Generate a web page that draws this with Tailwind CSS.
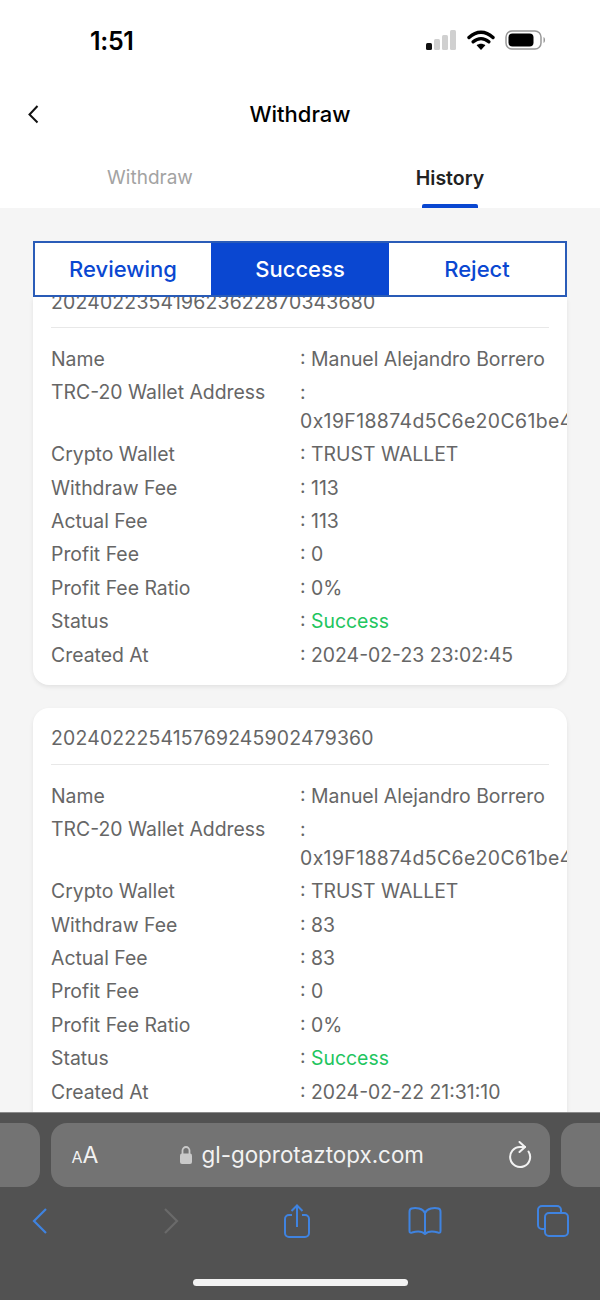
<!DOCTYPE html>
<html lang="en">
<head>
  <meta charset="UTF-8" />
  <meta name="viewport" content="width=device-width, initial-scale=1.0" />
  <title>Withdraw</title>
  <script src="https://cdn.jsdelivr.net/npm/@tailwindcss/browser@4"></script>
</head>
<body class="w-[600px] h-[1300px] overflow-hidden flex flex-col bg-white font-['Inter','Liberation_Sans',sans-serif]">

  <!-- status bar -->
  <div class="h-[76px] shrink-0 flex items-start justify-between pt-[26px] pl-[90px] pr-[53px]">
    <span class="text-[25px] leading-[30px] font-semibold text-black tracking-[-0.3px]">1:51</span>
    <div class="flex items-center h-[28px]">
      <svg width="30" height="20" viewBox="0 0 30 20"><rect x="0" y="13" width="6" height="7" rx="1.5" fill="#111"/><rect x="8" y="9" width="6" height="11" rx="1.5" fill="#d0d0d0"/><rect x="16" y="5" width="6" height="15" rx="1.5" fill="#d0d0d0"/><rect x="24" y="0" width="6" height="20" rx="1.5" fill="#d0d0d0"/></svg>
      <svg class="ml-[11px]" width="28" height="20" viewBox="0 0 28 20"><path d="M2 7.500C9.500 .5 18.500 .5 26 7.500M6.200 11.800C11 7.600 17 7.600 21.800 11.800" fill="none" stroke="#000" stroke-width="3.400" stroke-linecap="round"/><path d="M14 20 9.600 15.200C12.300 13.200 15.700 13.200 18.400 15.200Z" fill="#000"/></svg>
      <svg class="ml-[10px]" width="42" height="20" viewBox="0 0 42 20"><rect x="1" y="1" width="35" height="18" rx="6" fill="none" stroke="#999" stroke-width="1.500"/><rect x="3.500" y="3.500" width="25" height="13" rx="4" fill="#000"/><path d="M38.500 7c2 .5 2 5.500 0 6Z" fill="#999"/></svg>
    </div>
  </div>

  <!-- header -->
  <div class="h-[76px] shrink-0 relative flex items-center justify-center">
    <svg class="absolute left-[27px] top-[28px]" width="13" height="20" viewBox="0 0 13 20"><path d="M10.500 2 2.500 10.500 10.500 18.500" fill="none" stroke="#111" stroke-width="2"/></svg>
    <h1 class="text-[22px] leading-[28px] font-medium text-black">Withdraw</h1>
  </div>

  <!-- tabs -->
  <div class="h-[56px] shrink-0 grid grid-cols-2 text-[19px]">
    <div class="flex justify-center pt-[12px] text-[#a3a3a3]">Withdraw</div>
    <div class="relative flex justify-center pt-[12px] text-[19.5px] font-semibold text-[#222]">
      History
      <span class="absolute bottom-0 left-[122px] w-[56px] h-[4px] rounded-t-[2px] bg-[#0a47d1]"></span>
    </div>
  </div>

  <!-- content -->
  <main class="flex-1 min-h-0 overflow-hidden bg-[#f5f5f5] px-[33px] pt-[33px]">
    <div class="grid grid-cols-[176px_178px_1fr] h-[56px] border-2 border-[#2a5cb8] bg-white text-[22px] font-medium text-[#0a47d1]">
      <div class="flex items-center justify-center">Reviewing</div>
      <div class="flex items-center justify-center bg-[#0a47d1] text-white">Success</div>
      <div class="flex items-center justify-center">Reject</div>
    </div>

    <!-- first card is scrolled under the segment control -->
    <section class="bg-white rounded-b-[16px] shadow-[0_2px_4px_rgba(0,0,0,0.08)] overflow-hidden px-[18px] h-[388px]">
      <div class="-mt-[7px] h-[38px] text-[19.4px] leading-[24px] tracking-[0.2px] text-[#666] border-b border-[#e8e8e8]">202402235419623622870343680</div>
      <dl class="pt-[15px] text-[19.4px] leading-[33.4px] text-[#666]">
        <div class="flex"><dt class="w-[249px] shrink-0">Name</dt><dd>: Manuel Alejandro Borrero</dd></div>
        <div class="flex"><dt class="w-[249px] shrink-0">TRC-20 Wallet Address</dt><dd class="whitespace-nowrap">:<br /><span class="block -mt-[5px] tracking-[0.4px]">0x19F18874d5C6e20C61be49f4</span></dd></div>
        <div class="flex"><dt class="w-[249px] shrink-0">Crypto Wallet</dt><dd>: TRUST WALLET</dd></div>
        <div class="flex"><dt class="w-[249px] shrink-0">Withdraw Fee</dt><dd>: 113</dd></div>
        <div class="flex"><dt class="w-[249px] shrink-0">Actual Fee</dt><dd>: 113</dd></div>
        <div class="flex"><dt class="w-[249px] shrink-0">Profit Fee</dt><dd>: 0</dd></div>
        <div class="flex"><dt class="w-[249px] shrink-0">Profit Fee Ratio</dt><dd>: 0%</dd></div>
        <div class="flex"><dt class="w-[249px] shrink-0">Status</dt><dd>: <span class="text-[#22c55e]">Success</span></dd></div>
        <div class="flex"><dt class="w-[249px] shrink-0">Created At</dt><dd>: 2024-02-23 23:02:45</dd></div>
      </dl>
    </section>

    <section class="mt-[23px] bg-white rounded-[16px] shadow-[0_2px_4px_rgba(0,0,0,0.08)] overflow-hidden px-[18px] h-[430px]">
      <div class="pt-[18px] h-[57px] text-[19.4px] leading-[24px] tracking-[0.2px] text-[#666] border-b border-[#e8e8e8]">202402225415769245902479360</div>
      <dl class="pt-[15px] text-[19.4px] leading-[33.4px] text-[#666]">
        <div class="flex"><dt class="w-[249px] shrink-0">Name</dt><dd>: Manuel Alejandro Borrero</dd></div>
        <div class="flex"><dt class="w-[249px] shrink-0">TRC-20 Wallet Address</dt><dd class="whitespace-nowrap">:<br /><span class="block -mt-[5px] tracking-[0.4px]">0x19F18874d5C6e20C61be49f4</span></dd></div>
        <div class="flex"><dt class="w-[249px] shrink-0">Crypto Wallet</dt><dd>: TRUST WALLET</dd></div>
        <div class="flex"><dt class="w-[249px] shrink-0">Withdraw Fee</dt><dd>: 83</dd></div>
        <div class="flex"><dt class="w-[249px] shrink-0">Actual Fee</dt><dd>: 83</dd></div>
        <div class="flex"><dt class="w-[249px] shrink-0">Profit Fee</dt><dd>: 0</dd></div>
        <div class="flex"><dt class="w-[249px] shrink-0">Profit Fee Ratio</dt><dd>: 0%</dd></div>
        <div class="flex"><dt class="w-[249px] shrink-0">Status</dt><dd>: <span class="text-[#22c55e]">Success</span></dd></div>
        <div class="flex"><dt class="w-[249px] shrink-0">Created At</dt><dd>: 2024-02-22 21:31:10</dd></div>
      </dl>
    </section>
  </main>

  <!-- safari toolbar -->
  <footer class="h-[188px] shrink-0 bg-[#525252] border-t border-[#8a8a8a] flex flex-col">
    <div class="flex gap-[11px] pt-[10px] -mx-[461px] justify-center">
      <div class="w-[499px] h-[64px] shrink-0 rounded-[16px] bg-[#737373]"></div>
      <div class="w-[499px] h-[64px] shrink-0 rounded-[16px] bg-[#737373] flex items-center pl-[21px] text-white">
        <span class="w-[107px] text-[#f2f2f2]"><span class="text-[16px]">A</span><span class="text-[23px]">A</span></span>
        <div class="flex items-center gap-[9px] w-[245px]">
          <svg class="shrink-0" width="14" height="20" viewBox="0 0 14 20"><path d="M3.500 9V5.500a3.500 3.500 0 0 1 7 0V9" fill="none" stroke="#c9c9c9" stroke-width="1.800"/><rect x="1" y="8.500" width="12" height="10.500" rx="2" fill="#c9c9c9"/></svg>
          <span class="whitespace-nowrap text-[22.4px] leading-[30px] text-[#f2f2f2]">gl-goprotaztopx.com</span>
        </div>
        <svg class="ml-[84px]" width="24" height="28" viewBox="0 0 24 28"><path d="M20.500 10.500A10 10 0 1 1 12 6H17" fill="none" stroke="#f2f2f2" stroke-width="2" stroke-linecap="round"/><path d="M11.500 1 17 6 11.500 11" fill="none" stroke="#f2f2f2" stroke-width="2" stroke-linecap="round" stroke-linejoin="round"/></svg>
      </div>
      <div class="w-[499px] h-[64px] shrink-0 rounded-[16px] bg-[#737373]"></div>
    </div>

    <div class="flex items-center pl-[32px] pt-[1px] h-[66px]">
      <svg width="16" height="28" viewBox="0 0 16 28"><path d="M14 2 2 14 14 26" fill="none" stroke="#3f83e0" stroke-width="2.200"/></svg>
      <svg class="ml-[115px]" width="16" height="28" viewBox="0 0 16 28"><path d="M2 2 14 14 2 26" fill="none" stroke="#6a6a6a" stroke-width="2.200"/></svg>
      <svg class="ml-[105px]" width="26" height="34" viewBox="0 0 26 34"><path d="M8 11H5a4 4 0 0 0-4 4v14a4 4 0 0 0 4 4h16a4 4 0 0 0 4-4V15a4 4 0 0 0-4-4h-3M13 23V2M7.500 7 13 1.500 18.500 7" fill="none" stroke="#3f83e0" stroke-width="2"/></svg>
      <svg class="ml-[98px]" width="34" height="30" viewBox="0 0 34 30"><path d="M17 7C15 2.500 8 1 3.500 2.500 2 3 1.500 4 1.500 6V25C1.500 26.500 2 27 4 26.500 9 25 14 25 17 28 20 25 25 25 30 26.500 32 27 32.500 26.500 32.500 25V6C32.500 4 32 3 30.500 2.500 26 1 19 2.500 17 7ZM17 7V28" fill="none" stroke="#3f83e0" stroke-width="2" stroke-linejoin="round"/></svg>
      <svg class="ml-[95px]" width="32" height="32" viewBox="0 0 32 32"><path d="M24 7V5a4 4 0 0 0-4-4H5a4 4 0 0 0-4 4v15a4 4 0 0 0 4 4h3" fill="none" stroke="#3f83e0" stroke-width="2"/><rect x="8" y="8" width="23" height="23" rx="4" fill="none" stroke="#3f83e0" stroke-width="2"/></svg>
    </div>

    <div class="mt-[26px] mx-auto w-[215px] h-[7px] rounded-full bg-[#f2f2f2]"></div>
  </footer>
</body>
</html>
